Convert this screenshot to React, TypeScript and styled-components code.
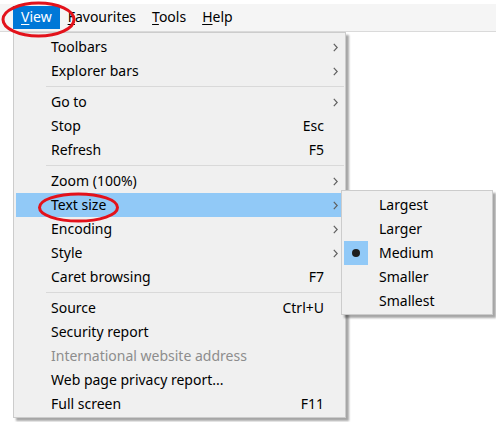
import React from "react";
import styled, { createGlobalStyle } from "styled-components";

const Global = createGlobalStyle`
  html, body { margin: 0; padding: 0; background: #ffffff; }
  body { font-family: "Noto Sans", "Open Sans", sans-serif; }
`;

const Screen = styled.div`
  position: relative;
  width: 496px;
  height: 422px;
  overflow: hidden;
  background: #ffffff;
  padding-top: 4px;
  box-sizing: border-box;
  font-family: "Noto Sans", "Open Sans", sans-serif;
  font-size: 14px;
  color: #000;
`;

const MenuBar = styled.div`
  display: flex;
  align-items: center;
  height: 27px;
  padding-left: 13px;
  background: #f5f5f5;
  border-bottom: 1px solid #dadada;
`;

const BarItem = styled.div<{ $active?: boolean }>`
  height: 23px;
  line-height: 22px;
  padding: 0 8px;
  background: ${(p) => (p.$active ? "#0078d7" : "transparent")};
  color: ${(p) => (p.$active ? "#ffffff" : "#000000")};
  & u { text-decoration-thickness: 1px; text-underline-offset: 2px; }
`;

const Content = styled.div`
  height: calc(100% - 28px);
  background: #ffffff;
`;

const Menu = styled.div<{ $left: number; $top: number; $width: number }>`
  position: absolute;
  left: ${(p) => p.$left}px;
  top: ${(p) => p.$top}px;
  width: ${(p) => p.$width}px;
  box-sizing: border-box;
  background: #f0f0f0;
  border: 1px solid #cccccc;
  padding: 2px 4px 1px 2px;
  box-shadow: 3px 3px 2px rgba(0, 0, 0, 0.35);
  display: flex;
  flex-direction: column;
`;

const Row = styled.div<{ $hover?: boolean; $disabled?: boolean }>`
  display: grid;
  grid-template-columns: 24px 11px 1fr auto 17px;
  align-items: center;
  height: 24px;
  line-height: 22px;
  background: ${(p) => (p.$hover ? "#91c9f7" : "transparent")};
  color: ${(p) => (p.$disabled ? "#8d8d8d" : "#000000")};
  white-space: nowrap;
`;

const Check = styled.div<{ $on?: boolean }>`
  grid-column: 1;
  height: 24px;
  display: flex;
  align-items: center;
  justify-content: center;
  background: ${(p) => (p.$on ? "#91c9f7" : "transparent")};
`;

const Dot = styled.span`
  width: 8px;
  height: 8px;
  border-radius: 50%;
  background: #1e1e1e;
`;

const Label = styled.span`
  grid-column: 3;
`;

const Shortcut = styled.span`
  grid-column: 4;
  text-align: right;
`;

const Arrow = styled.span`
  grid-column: 5;
  display: flex;
  justify-content: center;
  padding-left: 6px;
`;

const Separator = styled.div`
  height: 1px;
  background: #d9d9d9;
  margin: 3px -3px 3px 30px;
`;

const Marks = styled.svg`
  position: absolute;
  left: 0;
  top: 0;
  pointer-events: none;
`;

const Chevron = () => (
  <svg width="5" height="9" viewBox="0 0 5 9">
    <path d="M0.8 0.8 L4.2 4.5 L0.8 8.2" fill="none" stroke="#606060" strokeWidth="1.2" />
  </svg>
);

type Item =
  | { sep: true }
  | { label: string; sc?: string; sub?: boolean; hover?: boolean; disabled?: boolean };

const items: Item[] = [
  { label: "Toolbars", sub: true },
  { label: "Explorer bars", sub: true },
  { sep: true },
  { label: "Go to", sub: true },
  { label: "Stop", sc: "Esc" },
  { label: "Refresh", sc: "F5" },
  { sep: true },
  { label: "Zoom (100%)", sub: true },
  { label: "Text size", sub: true, hover: true },
  { label: "Encoding", sub: true },
  { label: "Style", sub: true },
  { label: "Caret browsing", sc: "F7" },
  { sep: true },
  { label: "Source", sc: "Ctrl+U" },
  { label: "Security report" },
  { label: "International website address", disabled: true },
  { label: "Web page privacy report..." },
  { label: "Full screen", sc: "F11" },
];

const sizes = ["Largest", "Larger", "Medium", "Smaller", "Smallest"];

export default function App() {
  return (
    <>
      <Global />
      <Screen>
        <MenuBar>
          <BarItem $active>
            <u>V</u>iew
          </BarItem>
          <BarItem>
            <u>F</u>avourites
          </BarItem>
          <BarItem>
            <u>T</u>ools
          </BarItem>
          <BarItem>
            <u>H</u>elp
          </BarItem>
        </MenuBar>
        <Content />
        <Menu $left={13} $top={32} $width={333}>
          {items.map((it, i) =>
            "sep" in it ? (
              <Separator key={i} />
            ) : (
              <Row key={i} $hover={it.hover} $disabled={it.disabled}>
                <Label>{it.label}</Label>
                {it.sc && <Shortcut>{it.sc}</Shortcut>}
                {it.sub && (
                  <Arrow>
                    <Chevron />
                  </Arrow>
                )}
              </Row>
            )
          )}
        </Menu>
        <Menu $left={341} $top={190} $width={152}>
          {sizes.map((s) => (
            <Row key={s}>
              <Check $on={s === "Medium"}>{s === "Medium" && <Dot />}</Check>
              <Label>{s}</Label>
            </Row>
          ))}
        </Menu>
        <Marks width="496" height="422" viewBox="0 0 496 422">
          <ellipse cx="38.5" cy="19.5" rx="35.5" ry="16.5" fill="none" stroke="#e3121b" strokeWidth="3" />
          <ellipse cx="78.5" cy="207.5" rx="39" ry="13.5" fill="none" stroke="#e3121b" strokeWidth="3" />
        </Marks>
      </Screen>
    </>
  );
}
